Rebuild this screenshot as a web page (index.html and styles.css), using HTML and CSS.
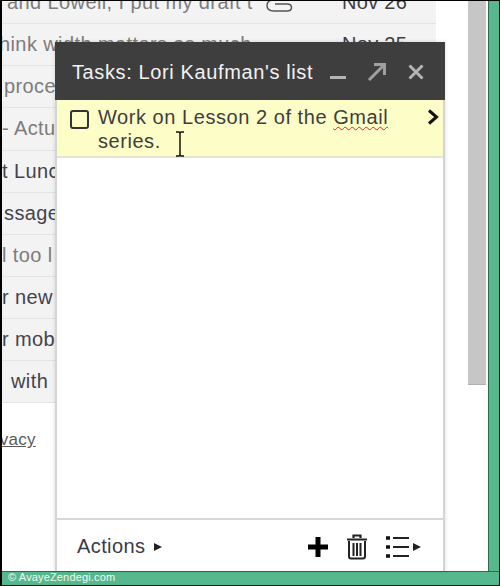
FILE: index.html
```html
<!DOCTYPE html>
<html lang="en">
<head>
<meta charset="utf-8">
<title>Tasks</title>
<link rel="stylesheet" href="styles.css">
</head>
<body>
<div class="window">
  <div class="desk">
    <div class="mail">
      <div class="rows">
        <div class="row first"><span class="subject read offset-a">and Lowell, I put my draft t</span><svg class="clip" viewBox="0 0 28 14" width="28" height="14"><path d="M27 1H8C3 1 1 3.500 1 6.500S3 12 8 12h13c3 0 4.500-1.500 4.500-3.500S24 5 21 5H9" fill="none" stroke="#555" stroke-width="1.500"/></svg><span class="date">Nov 26</span></div>
        <div class="row"><span class="subject read offset-b">hink width matters as much</span><span class="date">Nov 25</span></div>
        <div class="row"><span class="subject read offset-c">proce</span></div>
        <div class="row"><span class="subject read offset-d">- Actu</span></div>
        <div class="row"><span class="subject offset-e">t Lunc</span></div>
        <div class="row"><span class="subject offset-c">ssage</span></div>
        <div class="row"><span class="subject read offset-f">l too l</span></div>
        <div class="row"><span class="subject offset-f">r new</span></div>
        <div class="row"><span class="subject offset-f">r mob</span></div>
        <div class="row"><span class="subject offset-g">with</span></div>
      </div>
      <a class="privacy">Privacy</a>
    </div>
    <div class="scroll"><div class="thumb"></div></div>
  </div>
  <div class="footer">© AvayeZendegi.com</div>

  <section class="tasks">
    <header class="tasks-head">
      <h1 class="tasks-title">Tasks: Lori Kaufman's list</h1>
      <div class="head-icons">
        <svg viewBox="0 0 16 16" width="16" height="16"><path d="M0 13.500h16" stroke="#b4b4b4" stroke-width="3"/></svg>
        <svg viewBox="0 0 20 20" width="20" height="20"><path d="M2 18 17 3M7 2.500h10.500V13" fill="none" stroke="#a0a0a0" stroke-width="3"/></svg>
        <svg viewBox="0 0 16 16" width="16" height="16"><path d="M1.500 1.500l13 13M14.500 1.500l-13 13" stroke="#b4b4b4" stroke-width="3"/></svg>
      </div>
    </header>
    <div class="task">
      <span class="check"></span>
      <p class="task-text">Work on Lesson 2 of the <span class="typo">Gmail</span> series.</p>
      <svg class="chev" viewBox="0 0 12 16" width="12" height="16"><path d="M2 1.500 9.500 8 2 14.500" fill="none" stroke="#111" stroke-width="3"/></svg>
    </div>
    <div class="empty"></div>
    <footer class="tasks-foot">
      <span class="actions">Actions</span>
      <span class="tri"></span>
      <svg class="plus" viewBox="0 0 22 22" width="22" height="22"><path d="M11 1v20M1 11h20" stroke="#000" stroke-width="5"/></svg>
      <svg class="trash" viewBox="0 0 22 27" width="22" height="27"><path d="M1 6.500h20M7.500 5V2.500h7V5" fill="none" stroke="#222" stroke-width="2.200"/><path d="M3 8v15.500q0 2 2 2h12q2 0 2-2V8M7.500 10v13M11 10v13M14.500 10v13" fill="none" stroke="#222" stroke-width="2"/></svg>
      <svg class="list" viewBox="0 0 24 22" width="24" height="22"><path d="M8 2h16M8 11h16M8 20h16" stroke="#222" stroke-width="2"/><path d="M1 2h4M1 11h4M1 20h4" stroke="#111" stroke-width="3.500"/></svg>
      <span class="tri"></span>
    </footer>
  </section>
  <svg class="cursor" viewBox="0 0 12 26" width="12" height="26"><path d="M2 1h3l1 1 1-1h3M6 2v22M2 25h3l1-1 1 1h3" fill="none" stroke="#111" stroke-width="1.500"/></svg>
</div>
</body>
</html>
```
FILE: styles.css
```css
* { box-sizing: border-box; }
html, body { margin: 0; padding: 0; }
body { width: 500px; height: 586px; overflow: hidden; background: #000; }
.window {
  position: relative;
  width: 500px;
  height: 586px;
  display: flex;
  flex-direction: column;
  border-style: solid;
  border-color: #000 #0c1a12 #0c1a12 #000;
  border-width: 1px 1px 1px 2px;
  background: #57b88d;
  font-family: "Liberation Sans", Arial, sans-serif;
}
.desk {
  flex: 1;
  min-height: 0;
  display: flex;
  background: #fff;
  border-right: 1px solid #2e6a50;
  margin-right: 10px;
}
.mail { width: 466px; overflow: hidden; }
.rows { width: 434px; margin-top: -19px; }
.row {
  height: 42.150px;
  display: flex;
  align-items: center;
  background: #f3f3f3;
  border-bottom: 1px solid #e4e4e4;
  font-size: 20px;
  color: #303038;
  white-space: nowrap;
}
.subject { flex: 1; min-width: 0; letter-spacing: .4px; color: #43434d; }
.read { color: #7c7c7c; }
.offset-a { margin-left: 5px; }
.offset-b { margin-left: -3px; }
.offset-c { margin-left: 2px; }
.offset-d { margin-left: 0; }
.offset-e { margin-left: 0; }
.offset-f { margin-left: 0; }
.offset-g { margin-left: 9px; }
.clip { flex: none; margin: 6px 48px 0 0; }
.date { width: 94px; flex: none; font-size: 20px; color: #3e3e3e; letter-spacing: .3px; }
.privacy {
  display: block;
  margin: 27px 0 0 -24px;
  font-size: 17px;
  letter-spacing: .3px;
  color: #5a5a5a;
  text-decoration: underline;
}
.scroll { width: 18px; }
.thumb { height: 384px; background: #c6c6c6; border-bottom: 1px solid #b0b0b0; }
.footer {
  height: 14px;
  flex: none;
  padding-left: 6px;
  border-top: 1px solid #2d6b50;
  background: #57b88d;
  color: #f2f8f4;
  font-size: 11px;
  letter-spacing: .15px;
  line-height: 11px;
}
.tasks {
  position: absolute;
  left: 53px;
  top: 41px;
  width: 390px;
  height: 529px;
  display: flex;
  flex-direction: column;
  background: #fff;
  border-left: 2px solid #d4d4d4;
  border-right: 2px solid #d4d4d4;
  box-shadow: 0 0 4px rgba(0, 0, 0, .14);
}
.tasks-head {
  height: 58px;
  flex: none;
  margin: 0 -2px;
  padding: 2px 21px 0 17px;
  display: flex;
  align-items: center;
  justify-content: space-between;
  background: #3e3e3e;
}
.tasks-title { margin: 0; font-size: 20px; font-weight: 400; color: #f2f2f2; letter-spacing: .62px; white-space: nowrap; }
.head-icons { display: flex; align-items: center; gap: 21px; }
.task {
  height: 58px;
  flex: none;
  display: flex;
  align-items: flex-start;
  padding: 5px 4px 0 13px;
  background: #fdfdc8;
  border-bottom: 2px solid #e4e4d0;
}
.check {
  width: 19px;
  height: 19px;
  flex: none;
  margin: 5px 9px 0 0;
  border: 2px solid #333;
  border-radius: 3px;
}
.task-text {
  margin: 0;
  width: 302px;
  font-size: 20px;
  line-height: 24px;
  letter-spacing: .55px;
  color: #3e3e3e;
}
.typo { text-decoration: underline wavy #d8232a 1px; text-underline-offset: 2px; }
.chev { margin: 4px 0 0 27px; flex: none; }
.empty { flex: 1; }
.tasks-foot {
  height: 53px;
  flex: none;
  display: flex;
  align-items: center;
  padding: 2px 0 0 20px;
  border-top: 2px solid #d8d8d8;
}
.actions { font-size: 20px; letter-spacing: .4px; color: #3a3a44; margin-right: 9px; }
.tri {
  width: 0;
  height: 0;
  border-left: 8px solid #222;
  border-top: 4.500px solid transparent;
  border-bottom: 4.500px solid transparent;
}
.plus { margin-left: 145px; }
.trash { margin-left: 17px; }
.list { margin: 0 4px 0 17px; }
.cursor { position: absolute; left: 172px; top: 130px; }
```
